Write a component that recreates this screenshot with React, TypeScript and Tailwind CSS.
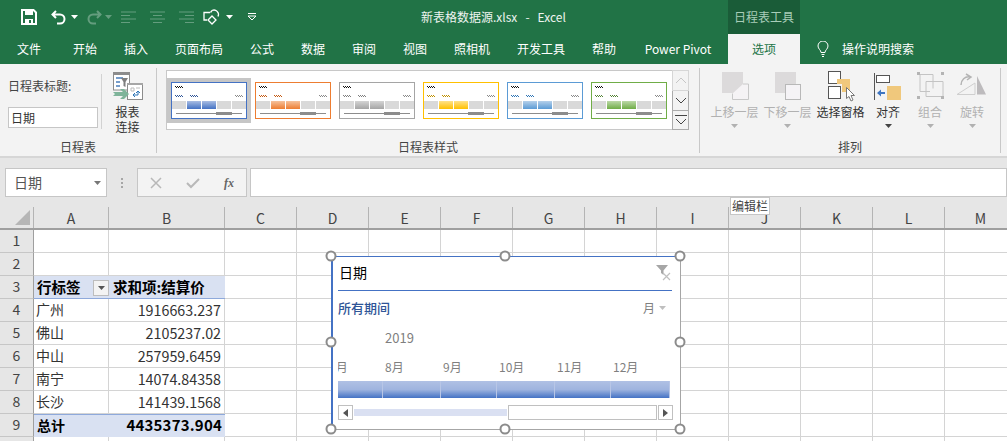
import React from 'react';

const FONT = "font-['Noto_Sans_CJK_SC','Noto_Sans',sans-serif]";

const TABS = [
  { label: '文件', w: 'w-[58px]' },
  { label: '开始', w: 'w-[54px]' },
  { label: '插入', w: 'w-[48px]' },
  { label: '页面布局', w: 'w-[78px]' },
  { label: '公式', w: 'w-[48px]' },
  { label: '数据', w: 'w-[54px]' },
  { label: '审阅', w: 'w-[48px]' },
  { label: '视图', w: 'w-[54px]' },
  { label: '照相机', w: 'w-[60px]' },
  { label: '开发工具', w: 'w-[78px]' },
  { label: '帮助', w: 'w-[48px]' },
  { label: 'Power Pivot', w: 'w-[100px]' },
];

const THUMBS = [
  { id: 'blue', border: '#4472c4', top: '#a9bde3', bottom: '#4472c4', squiggle: '#2f5597' },
  { id: 'orange', border: '#ed7d31', top: '#f6c29c', bottom: '#ed7d31', squiggle: '#c55a11' },
  { id: 'grey', border: '#a5a5a5', top: '#d4d4d4', bottom: '#a5a5a5', squiggle: '#7f7f7f' },
  { id: 'gold', border: '#ffc000', top: '#ffe28a', bottom: '#ffc000', squiggle: '#bf9000' },
  { id: 'sky', border: '#5b9bd5', top: '#b5d0ea', bottom: '#5b9bd5', squiggle: '#2e75b6' },
  { id: 'green', border: '#70ad47', top: '#bcd9a8', bottom: '#70ad47', squiggle: '#548235' },
];

const COLUMNS = [
  { label: 'A', w: 'w-[75px]' },
  { label: 'B', w: 'w-[116px]' },
  { label: 'C', w: 'w-[72px]' },
  { label: 'D', w: 'w-[72px]' },
  { label: 'E', w: 'w-[72px]' },
  { label: 'F', w: 'w-[72px]' },
  { label: 'G', w: 'w-[72px]' },
  { label: 'H', w: 'w-[72px]' },
  { label: 'I', w: 'w-[72px]' },
  { label: 'J', w: 'w-[72px]' },
  { label: 'K', w: 'w-[72px]' },
  { label: 'L', w: 'w-[72px]' },
  { label: 'M', w: 'w-[72px]' },
];

const DATA = [
  ['广州', '1916663.237'],
  ['佛山', '2105237.02'],
  ['中山', '257959.6459'],
  ['南宁', '14074.84358'],
  ['长沙', '141439.1568'],
];

const MONTHS = [
  { label: '7月', w: 'w-[54px]', bar: 'w-[45px]', first: true },
  { label: '8月', w: 'w-[58px]', bar: 'w-[58px]' },
  { label: '9月', w: 'w-[56px]', bar: 'w-[56px]' },
  { label: '10月', w: 'w-[58px]', bar: 'w-[58px]' },
  { label: '11月', w: 'w-[56px]', bar: 'w-[56px]' },
  { label: '12月', w: 'w-[59px]', bar: 'w-[59px]' },
];

const Caret = ({ color = '#fff' }: { color?: string }) => (
  <svg width="7" height="4" viewBox="0 0 7 4"><path d="M0 0h7L3.5 4z" fill={color} /></svg>
);

// little dotted wave used in the style thumbnails
const Squiggle = ({ x, y, color }: { x: number; y: number; color: string }) => (
  <g fill={color} shapeRendering="crispEdges">
    {[0, 1, 2, 3, 4, 5, 6, 7].map((i) => (
      <rect key={i} x={x + i} y={y + (i % 2)} width="1" height="1" />
    ))}
  </g>
);

const Thumb = ({ t }: { t: (typeof THUMBS)[number] }) => (
  <svg width="76" height="37" viewBox="0 0 76 37" className="shrink-0 block">
    <defs>
      <linearGradient id={`g-${t.id}`} x1="0" y1="0" x2="0" y2="1">
        <stop offset="0" stopColor={t.top} />
        <stop offset="1" stopColor={t.bottom} />
      </linearGradient>
    </defs>
    <rect x="0.5" y="0.5" width="75" height="36" fill="#fff" stroke={t.border} />
    <Squiggle x={4} y={4} color="#111" />
    <Squiggle x={4} y={13} color={t.squiggle} />
    <Squiggle x={19} y={13} color={t.squiggle} />
    <Squiggle x={64} y={13} color="#8a8a8a" />
    <rect x="1" y="19" width="14" height="8" fill="#d9d9d9" />
    <rect x="16" y="19" width="14" height="8" fill={`url(#g-${t.id})`} />
    <rect x="31" y="19" width="14" height="8" fill={`url(#g-${t.id})`} />
    <rect x="46" y="19" width="14" height="8" fill="#d9d9d9" />
    <rect x="61" y="19" width="14" height="8" fill="#d9d9d9" />
    <rect x="5" y="31" width="66" height="1" fill="#8c8c8c" />
    <rect x="45" y="30" width="16" height="3" fill="#8c8c8c" />
  </svg>
);

const ArrangeButton = ({ w, label, dim, noCaret, children }: { w: string; label: string; dim?: boolean; noCaret?: boolean; children: React.ReactNode }) => (
  <div className={`${w} flex flex-col items-center shrink-0`}>
    <svg width="40" height="32" viewBox="0 0 40 32">{children}</svg>
    <div className={`h-[20px] leading-[20px] text-[12px] whitespace-nowrap ${dim ? 'text-[#b1b1b1]' : 'text-[#333]'}`}>{label}</div>
    {!noCaret && <div className="h-[8px] flex items-center"><Caret color={dim ? '#b1b1b1' : '#444'} /></div>}
  </div>
);

const Handle = ({ className }: { className: string }) => (
  <div className={`absolute w-[11px] h-[11px] rounded-full bg-white border-2 border-[#8c8c8c] -translate-x-1/2 -translate-y-1/2 ${className}`} />
);

const RowHead = ({ n }: { n?: number }) => (
  <div className="w-[34px] shrink-0 h-full bg-[#e6e6e6] border-r border-r-[#9f9f9f] border-b border-b-[#c6c6c6] flex items-center justify-center text-[14px] text-[#444] pb-[1px]">{n}</div>
);

const cell = 'shrink-0 h-full border-r border-b border-[#d4d4d4]';

const Filler = ({ from }: { from: number }) => (
  <>
    {COLUMNS.slice(from).map((c) => (
      <div key={c.label} className={`${c.w} ${cell}`} />
    ))}
  </>
);

const App: React.FC = () => {
  return (
    <div className={`w-[1007px] h-[441px] overflow-hidden relative bg-white ${FONT}`}>
      {/* title bar */}
      <div className="h-[34px] bg-[#217346] flex items-center text-white relative">
        <div className="w-[421px] shrink-0 flex items-center">
          <svg width="16" height="16" viewBox="0 0 16 16" className="ml-[21px] shrink-0">
            <path d="M1 1h11.5L15 3.5V15H1z" fill="none" stroke="#fff" strokeWidth="2" />
            <rect x="4" y="1" width="8" height="5" fill="#fff" />
            <rect x="4" y="10" width="8" height="5" fill="#fff" />
            <rect x="8" y="11" width="2" height="3" fill="#217346" />
          </svg>
          <svg width="16" height="16" viewBox="0 0 16 16" className="ml-[14px] shrink-0">
            <path d="M5 2L1.5 5.5 5 9M2 5.5h7a4.5 4.5 0 0 1 0 9H6" fill="none" stroke="#fff" strokeWidth="2" />
          </svg>
          <div className="ml-[4px]"><Caret /></div>
          <svg width="16" height="16" viewBox="0 0 16 16" className="ml-[8px] shrink-0 opacity-30">
            <path d="M11 2l3.5 3.5L11 9M14 5.5H7a4.5 4.5 0 0 0 0 9h3" fill="none" stroke="#fff" strokeWidth="2" />
          </svg>
          <div className="ml-[3px] opacity-30"><Caret /></div>
          <svg width="15" height="12" viewBox="0 0 15 12" className="ml-[9px] shrink-0 opacity-30">
            <path d="M0 1h15M0 4.500h9M0 8h15M0 11.500h9" stroke="#fff" />
          </svg>
          <svg width="15" height="12" viewBox="0 0 15 12" className="ml-[14px] shrink-0 opacity-30">
            <path d="M0 1h15M3 4.500h9M0 8h15M3 11.500h9" stroke="#fff" />
          </svg>
          <svg width="15" height="12" viewBox="0 0 15 12" className="ml-[14px] shrink-0 opacity-30">
            <path d="M0 1h15M6 4.500h9M0 8h15M6 11.500h9" stroke="#fff" />
          </svg>
          <svg width="18" height="18" viewBox="0 0 18 18" className="ml-[9px] shrink-0">
            <path d="M7 4.500H1v7.500h3" fill="none" stroke="#fff" strokeWidth="1.300" />
            <path d="M9 2.500a4.500 4.500 0 0 1 6 6" fill="none" stroke="#fff" strokeWidth="1.300" />
            <path d="M9 8l4 4-4 4-4-4z" fill="none" stroke="#fff" strokeWidth="1.300" />
            <path d="M7.500 4.500L9 2.500" stroke="#fff" strokeWidth="1.300" />
          </svg>
          <div className="ml-[5px]"><Caret /></div>
          <svg width="8" height="8" viewBox="0 0 8 8" className="ml-[15px] shrink-0">
            <path d="M0 .5h8M0 3h8L4 7z" fill="none" stroke="#fff" />
          </svg>
        </div>
        <div className="text-[12px] text-[#eef4f0] whitespace-nowrap w-[307px] shrink-0">新表格数据源.xlsx&nbsp;&nbsp;&nbsp;-&nbsp;&nbsp;&nbsp;Excel</div>
        <div className="w-[72px] h-full bg-[#1a5c38] flex items-center justify-center text-[12px] text-[#a9cdb8] whitespace-nowrap shrink-0">日程表工具</div>
      </div>

      {/* tabs */}
      <div className="h-[30px] bg-[#217346] flex text-[12px] text-white">
        {TABS.map((t) => (
          <div key={t.label} className={`${t.w} h-full flex items-center justify-center whitespace-nowrap shrink-0`}>{t.label}</div>
        ))}
        <div className="w-[72px] h-full bg-[#f3f3f3] text-[#217346] flex items-center justify-center shrink-0">选项</div>
        <div className="flex items-center ml-[17px]">
          <svg width="12" height="16" viewBox="0 0 12 16" className="shrink-0">
            <path d="M4 11.500C4 9 1 8 1 5a5 5 0 0 1 10 0c0 3-3 4-3 6.500zM4.500 13.500h3M5 15.500h2" fill="none" stroke="#fff" />
          </svg>
          <span className="ml-[13px] whitespace-nowrap">操作说明搜索</span>
        </div>
      </div>

      {/* ribbon */}
      <div className="h-[94px] bg-[#f3f3f3] border-b-2 border-[#d6d6d6] flex items-start text-[12px] text-[#444]">
        {/* group: timeline */}
        <div className="w-[157px] h-[85px] mt-[4px] shrink-0 flex flex-col border-r border-[#c8c8c8]">
          <div className="h-[71px] shrink-0 flex">
            <div className="w-[102px] border-r border-[#d2d2d2] mt-[6px] mb-[10px] pl-[8px] shrink-0">
              <div className="h-[20px] leading-[20px] mt-[2px] whitespace-nowrap">日程表标题:</div>
              <div className="mt-[11px] w-[90px] h-[21px] bg-white border border-[#c6c6c6] px-[2px] leading-[19px] text-[#333]">日期</div>
            </div>
            <div className="flex-1 flex flex-col items-center pt-[4px] text-[#333] pr-[3px]">
              <svg width="32" height="30" viewBox="0 0 32 30" className="shrink-0">
                <rect x="1.500" y="1" width="16" height="17" fill="#fff" stroke="#8c8c8c" />
                <rect x="1" y="0" width="17" height="3" fill="#8c8c8c" />
                <path d="M4 6h7M4 10h4M4 14h4" stroke="#4a7ebb" strokeWidth="1.500" />
                <path d="M9 6h7l-2.500 4v5l-2-1v-4z" fill="#7f7f7f" />
                <rect x="15.500" y="11.500" width="15" height="16" fill="#fff" stroke="#8c8c8c" />
                <rect x="15" y="11" width="16" height="2" fill="#a6a6a6" />
                <path d="M19 16h3v3h-3zM24 16h4" stroke="#bcbcbc" fill="none" />
                <path d="M26 19v4h-5M23 21l-2 2 2 2M26 19l-2 2M26 19l2 2" stroke="#2e75b6" fill="none" />
                <path d="M1 20h10l-3-3h4l5 5-5 5H8l3-3H1l2-2z" fill="#7fb49a" />
              </svg>
              <div className="leading-[15px] mt-[2px] text-center">报表<br />连接</div>
            </div>
          </div>
          <div className="h-[16px] shrink-0 leading-[16px] pl-[60px] whitespace-nowrap">日程表</div>
        </div>

        {/* group: styles */}
        <div className="w-[543px] h-[85px] mt-[4px] shrink-0 flex flex-col border-r border-[#c8c8c8]">
          <div className="h-[71px] shrink-0 flex pl-[9px] pt-[2px]">
            <div className="w-[506px] h-[60px] bg-white border-y border-[#c8c8c8] border-l flex items-center gap-[8px] pl-[4px] shrink-0">
              {THUMBS.map((t, i) => (
                <div key={t.id} className={i === 0 ? 'shadow-[0_0_0_4px_#c6c6c6]' : ''}>
                  <Thumb t={t} />
                </div>
              ))}
            </div>
            <div className="w-[17px] h-[60px] flex flex-col shrink-0">
              <div className="h-[21px] bg-[#f3f3f3] border border-[#d6d6d6] flex items-center justify-center">
                <svg width="12" height="7" viewBox="0 0 12 7"><path d="M1 6l5-5 5 5" fill="none" stroke="#c6c6c6" /></svg>
              </div>
              <div className="h-[19px] border-x border-[#ababab] flex items-center justify-center">
                <svg width="12" height="7" viewBox="0 0 12 7"><path d="M1 1l5 5 5-5" fill="none" stroke="#444" /></svg>
              </div>
              <div className="h-[20px] border border-[#ababab] flex flex-col items-center justify-center gap-[2px]">
                <div className="w-[12px] h-px bg-[#444]" />
                <svg width="12" height="7" viewBox="0 0 12 7"><path d="M1 1l5 5 5-5" fill="none" stroke="#444" /></svg>
              </div>
            </div>
          </div>
          <div className="h-[16px] shrink-0 leading-[16px] pl-[241px] whitespace-nowrap">日程表样式</div>
        </div>

        {/* group: arrange */}
        <div className="w-[301px] h-[85px] mt-[4px] shrink-0 flex flex-col border-r border-[#c8c8c8]">
          <div className="h-[71px] shrink-0 flex pl-[8px] pt-[2px]">
            <ArrangeButton w="w-[53px]" label="上移一层" dim>
              <rect x="7" y="2" width="21" height="21" fill="#dcdadb" />
              <path d="M17.500 23.500V29.500H33.500V14H28" fill="#f5f3f5" stroke="#c8c8c8" />
            </ArrangeButton>
            <ArrangeButton w="w-[53px]" label="下移一层" dim>
              <rect x="7" y="2" width="21" height="21" fill="#dcdadb" />
              <rect x="17.500" y="14.500" width="15" height="15" fill="#f5f3f6" stroke="#b8b8b8" />
            </ArrangeButton>
            <ArrangeButton w="w-[53px]" label="选择窗格" noCaret>
              <rect x="7.500" y="1.500" width="12" height="12" fill="#fff" stroke="#555" />
              <rect x="7.500" y="16.500" width="12" height="12" fill="#fff" stroke="#555" />
              <rect x="16" y="9" width="13" height="5" fill="#f0c87c" />
              <rect x="21" y="9" width="8" height="13" fill="#f0c87c" />
              <path d="M25.500 17.500v11l2.500-2 2 4.500 2-1-2-4.500h3.500z" fill="#fff" stroke="#777" />
            </ArrangeButton>
            <ArrangeButton w="w-[42px]" label="对齐">
              <path d="M6.500 3v27" stroke="#555" />
              <rect x="8.500" y="5.500" width="13" height="7" fill="#fff" stroke="#555" />
              <rect x="19" y="16" width="14" height="14" fill="#f0c87c" />
              <path d="M9 23l4-3.500v2.500h4v2h-4v2.500z" fill="#3f75c0" />
            </ArrangeButton>
            <ArrangeButton w="w-[42px]" label="组合" dim>
              <path d="M10 4.500h13v14M10 4.500v17h10M16 11.500h17v15H16z" fill="none" stroke="#c4c4c4" />
              <path d="M7 2h3v3H7zM31 2h3v3h-3zM7 26h3v3H7zM31 26h3v3h-3z" fill="#b4b4b4" />
            </ArrangeButton>
            <ArrangeButton w="w-[42px]" label="旋转" dim>
              <path d="M34 24.500H25V6z" fill="#bdbbbd" />
              <path d="M5 24.500L23 13v11.500z" fill="none" stroke="#cfcfcf" />
              <path d="M9 15c0-5 4-9 9-8M14 4l5 3-4 3" fill="none" stroke="#b4b4b4" strokeWidth="1.500" />
            </ArrangeButton>
          </div>
          <div className="h-[16px] shrink-0 leading-[16px] pl-[138px] whitespace-nowrap">排列</div>
        </div>
      </div>

      {/* formula bar */}
      <div className="h-[49px] bg-[#e6e6e6] pt-[10px] flex items-start">
        <div className="ml-[5px] w-[102px] h-[29px] bg-white border border-[#c6c6c6] flex items-center justify-between pl-[8px] pr-[5px] text-[14px] text-[#555] shrink-0">
          <span>日期</span>
          <Caret color="#777" />
        </div>
        <div className="w-[30px] h-[29px] flex flex-col items-center justify-center gap-[2px] shrink-0">
          <div className="w-[2px] h-[2px] bg-[#a6a6a6]" />
          <div className="w-[2px] h-[2px] bg-[#a6a6a6]" />
          <div className="w-[2px] h-[2px] bg-[#a6a6a6]" />
        </div>
        <div className="w-[110px] h-[29px] bg-[#f3f3f3] border border-[#c6c6c6] flex items-center shrink-0">
          <svg width="12" height="12" viewBox="0 0 12 12" className="ml-[12px]"><path d="M1 1l10 10M11 1L1 11" stroke="#b8b8b8" strokeWidth="1.500" /></svg>
          <svg width="14" height="12" viewBox="0 0 14 12" className="ml-[24px]"><path d="M1 6l4 4 8-8" fill="none" stroke="#b8b8b8" strokeWidth="2" /></svg>
          <span className="ml-[24px] text-[12px] italic font-bold text-[#666] font-['Liberation_Serif',serif]">fx</span>
        </div>
        <div className="ml-[3px] flex-1 h-[29px] bg-white border border-[#c6c6c6]" />
      </div>

      {/* column headers */}
      <div className="h-[23px] flex bg-[#e6e6e6] border-b-2 border-[#9f9f9f] text-[14px] text-[#444]">
        <div className="w-[34px] shrink-0 border-r border-[#b4b4b4] flex items-end justify-end pr-[3px] pb-[3px]">
          <svg width="15" height="15" viewBox="0 0 15 15"><path d="M15 0v15H0z" fill="#b6b6b6" /></svg>
        </div>
        {COLUMNS.map((c) => (
          <div key={c.label} className={`${c.w} shrink-0 border-r border-[#b4b4b4] flex items-center justify-center leading-none`}>{c.label}</div>
        ))}
      </div>

      {/* grid */}
      <div className="text-[14px] text-[#333]">
        {[1, 2].map((n) => (
          <div key={n} className="h-[23px] flex">
            <RowHead n={n} />
            <Filler from={0} />
          </div>
        ))}
        <div className="h-[23px] flex">
          <RowHead n={3} />
          <div className="w-[75px] shrink-0 h-full bg-[#d9e1f2] border-b border-[#8ea9db] flex items-center pl-[3px] pb-[1px] text-[14.5px] font-bold text-black relative">
            行标签
            <div className="absolute right-[0px] top-[4px] w-[16px] h-[16px] bg-[#f3f3f3] border border-[#bdbdbd] flex items-center justify-center"><Caret color="#555" /></div>
          </div>
          <div className="w-[116px] shrink-0 h-full bg-[#d9e1f2] border-b border-[#8ea9db] flex items-center pl-[4px] pb-[1px] text-[14.5px] font-bold text-black whitespace-nowrap">求和项:结算价</div>
          <Filler from={2} />
        </div>
        {DATA.map((r, i) => (
          <div key={r[0]} className="h-[23px] flex">
            <RowHead n={i + 4} />
            <div className={`w-[75px] pl-[2px] pb-[1px] flex items-center ${cell}`}>{r[0]}</div>
            <div className={`w-[116px] pr-[3px] pb-[1px] flex items-center justify-end text-[14.3px] ${cell}`}>{r[1]}</div>
            <Filler from={2} />
          </div>
        ))}
        <div className="h-[23px] flex">
          <RowHead n={9} />
          <div className="w-[75px] shrink-0 h-full bg-[#d9e1f2] border-t border-[#8ea9db] flex items-center pl-[3px] pb-[1px] font-bold text-black">总计</div>
          <div className="w-[116px] shrink-0 h-full bg-[#d9e1f2] border-t border-[#8ea9db] flex items-center justify-end pr-[3px] pb-[1px] text-[15px] tracking-[0.2px] font-bold text-black">4435373.904</div>
          <Filler from={2} />
        </div>
        <div className="h-[23px] flex">
          <RowHead />
          <Filler from={0} />
        </div>
      </div>

      {/* tooltip */}
      <div className="absolute left-[730px] top-[197px] w-[40px] h-[18px] bg-white border border-[#c6c6c6] text-[12px] leading-[16px] text-center text-[#444] whitespace-nowrap">编辑栏</div>

      {/* timeline */}
      <div className="absolute left-[331px] top-[256px] w-[350px] h-[174px] bg-white border border-[#a6a6a6] border-t-[#4472c4] border-l-2 border-l-[#4472c4]">
        <div className="ml-[5px] mr-[8px] h-[34px] border-b border-[#4472c4] flex items-center justify-between pl-[1px] pb-[2px]">
          <span className="text-[14px] text-black">日期</span>
          <svg width="16" height="16" viewBox="0 0 16 16">
            <path d="M0 0h12L7.500 5.500V10L5 8V5.500z" fill="#a6a6a6" />
            <path d="M7 8l7 7M14 8l-7 7" stroke="#c0c0c0" strokeWidth="1.200" />
          </svg>
        </div>
        <div className="mx-[5px] mt-[7px] h-[20px] flex items-center justify-between pr-[9px]">
          <span className="text-[13px] font-medium text-[#2f5597]">所有期间</span>
          <span className="flex items-center text-[12px] text-[#7f7f7f]">月<span className="ml-[4px]"><Caret color="#bfbfbf" /></span></span>
        </div>
        <div className="ml-[52px] mt-[10px] h-[20px] leading-[20px] text-[13px] text-[#7f7f7f]">2019</div>
        <div className="ml-[5px] mt-[9px] w-[332px] h-[20px] flex overflow-hidden text-[12px] leading-[20px] text-[#7f7f7f]">
          {MONTHS.map((m) => (
            <div key={m.label} className={`${m.w} shrink-0 whitespace-nowrap ${m.first ? '-ml-[9px]' : 'pl-[2px]'}`}>{m.label}</div>
          ))}
        </div>
        <div className="ml-[5px] mt-[4px] w-[332px] h-[17px] flex bg-gradient-to-b from-[#b0c1e4] via-[#9fb4df] to-[#4472c4]">
          {MONTHS.map((m) => (
            <div key={m.label} className={`${m.bar} shrink-0 h-full border-r border-[#b8c6e6]`} />
          ))}
        </div>
        <div className="ml-[5px] mt-[7px] w-[335px] h-[15px] flex">
          <div className="w-[15px] h-full bg-white border border-[#c0c0c0] flex items-center justify-center shrink-0">
            <svg width="5" height="8" viewBox="0 0 5 8"><path d="M5 0v8L0 4z" fill="#555" /></svg>
          </div>
          <div className="w-[153px] mx-[1px] mt-[4px] h-[7px] bg-[#dae0f2] shrink-0" />
          <div className="w-[149px] h-full bg-white border border-[#c0c0c0] shrink-0" />
          <div className="w-[15px] ml-[1px] h-full bg-white border border-[#c0c0c0] flex items-center justify-center shrink-0">
            <svg width="5" height="8" viewBox="0 0 5 8"><path d="M0 0v8l5-4z" fill="#555" /></svg>
          </div>
        </div>
        <Handle className="left-[-2px] top-[-1px]" />
        <Handle className="left-[172px] top-[-1px]" />
        <Handle className="left-full top-[-1px]" />
        <Handle className="left-[-2px] top-[85px]" />
        <Handle className="left-full top-[85px]" />
        <Handle className="left-[-2px] top-full" />
        <Handle className="left-[172px] top-full" />
        <Handle className="left-full top-full" />
      </div>
    </div>
  );
};

export default App;
